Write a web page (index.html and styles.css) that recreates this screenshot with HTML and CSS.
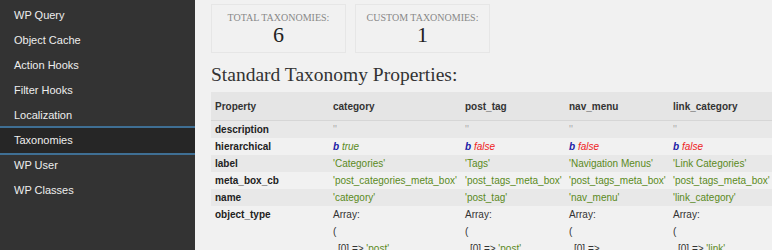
FILE: index.html
```html
<!DOCTYPE html>
<html>
  <head>
    <link rel="stylesheet" href="styles.css">
  </head>
  <body>
    <ul class="sidebar">
      <li>WP Query</li>
      <li>Object Cache</li>
      <li>Action Hooks</li>
      <li>Filter Hooks</li>
      <li>Localization</li>
      <li class="active">Taxonomies</li>
      <li>WP User</li>
      <li>WP Classes</li>
    </ul>

    <div class="main">
      <div class="stats">
        <div class="stat">
          <div class="stat-label">Total Taxonomies:</div>
          <div class="stat-value">6</div>
        </div>
        <div class="stat">
          <div class="stat-label">Custom Taxonomies:</div>
          <div class="stat-value">1</div>
        </div>
      </div>

      <h2>Standard Taxonomy Properties:</h2>

      <table class="props">
        <colgroup>
          <col style="width: 118px">
          <col style="width: 132px">
          <col style="width: 104px">
          <col style="width: 104px">
          <col style="width: 110px">
        </colgroup>
        <thead>
          <tr>
            <th>Property</th>
            <th>category</th>
            <th>post_tag</th>
            <th>nav_menu</th>
            <th>link_category</th>
          </tr>
        </thead>
        <tbody>
          <tr>
            <td class="key">description</td>
            <td class="empty">''</td>
            <td class="empty">''</td>
            <td class="empty">''</td>
            <td class="empty">''</td>
          </tr>
          <tr>
            <td class="key">hierarchical</td>
            <td><span class="type">b</span> <span class="true">true</span></td>
            <td><span class="type">b</span> <span class="false">false</span></td>
            <td><span class="type">b</span> <span class="false">false</span></td>
            <td><span class="type">b</span> <span class="false">false</span></td>
          </tr>
          <tr>
            <td class="key">label</td>
            <td class="str">'Categories'</td>
            <td class="str">'Tags'</td>
            <td class="str">'Navigation Menus'</td>
            <td class="str">'Link Categories'</td>
          </tr>
          <tr>
            <td class="key">meta_box_cb</td>
            <td class="str">'post_categories_meta_box'</td>
            <td class="str">'post_tags_meta_box'</td>
            <td class="str">'post_tags_meta_box'</td>
            <td class="str">'post_tags_meta_box'</td>
          </tr>
          <tr>
            <td class="key">name</td>
            <td class="str">'category'</td>
            <td class="str">'post_tag'</td>
            <td class="str">'nav_menu'</td>
            <td class="str">'link_category'</td>
          </tr>
          <tr>
            <td class="key">object_type</td>
            <td>Array:<br>(<br><span class="indent">[0] =&gt; <span class="str">'post'</span></span></td>
            <td>Array:<br>(<br><span class="indent">[0] =&gt; <span class="str">'post'</span></span></td>
            <td>Array:<br>(<br><span class="indent">[0] =&gt;</span></td>
            <td>Array:<br>(<br><span class="indent">[0] =&gt; <span class="str">'link'</span></span></td>
          </tr>
        </tbody>
      </table>
    </div>
  </body>
</html>
```

FILE: styles.css
```css
body {
  margin: 0;
  height: 250px;
  display: flex;
  overflow: hidden;
  background-color: #f1f1f1;
  font-family: "Liberation Sans", Arial, sans-serif;
}

/* menu on the left */
.sidebar {
  list-style: none;
  margin: 0;
  padding: 3px 0 0;
  width: 195px;
  flex-shrink: 0;
  background-color: #333;
}

.sidebar li {
  height: 25px;
  line-height: 25px;
  padding-left: 14px;
  font-size: 11px;
  color: #eee;
}

.sidebar li.active {
  background-color: #262626;
  box-shadow: 0 -2px 0 #3f6f94, 0 2px 0 #3f6f94;
}

/* content */
.main {
  flex-grow: 1;
  padding: 4px 0 0 16px;
  overflow: hidden;
}

.stats {
  display: flex;
  gap: 9px;
}

.stat {
  width: 133px;
  height: 47px;
  border: 1px solid #e6e6e6;
  text-align: center;
  font-family: "Liberation Serif", Georgia, serif;
}

.stat-label {
  margin-top: 7px;
  font-size: 10px;
  text-transform: uppercase;
  color: #888;
}

.stat-value {
  font-size: 22px;
  line-height: 24px;
  color: #222;
}

h2 {
  margin: 10px 0 0;
  font-family: "Liberation Serif", Georgia, serif;
  font-weight: normal;
  font-size: 19.5px;
  line-height: 24px;
  color: #333;
}

.props {
  margin-top: 5px;
  border-collapse: collapse;
  table-layout: fixed;
  width: 568px;
  font-size: 10px;
  color: #333;
}

.props th {
  height: 28px;
  padding: 0 0 0 4px;
  text-align: left;
  font-weight: bold;
  background-color: #e5e5e5;
  border-bottom: 1px solid #d6d6d6;
  white-space: nowrap;
}

.props td {
  height: 17px;
  line-height: 17px;
  padding: 0 0 0 4px;
  vertical-align: top;
  white-space: nowrap;
}

.props tbody tr:nth-child(odd) {
  background-color: #e8e8e8;
}

.props .key {
  font-weight: bold;
  color: #222;
}

.str {
  color: #5b8a1c;
}

.empty {
  color: #aaa;
}

.type {
  color: #1a1aa6;
  font-weight: bold;
  font-style: italic;
}

.true {
  color: #5b8a1c;
  font-style: italic;
}

.false {
  color: #ee2222;
  font-style: italic;
}

.indent {
  padding-left: 5px;
}
```
